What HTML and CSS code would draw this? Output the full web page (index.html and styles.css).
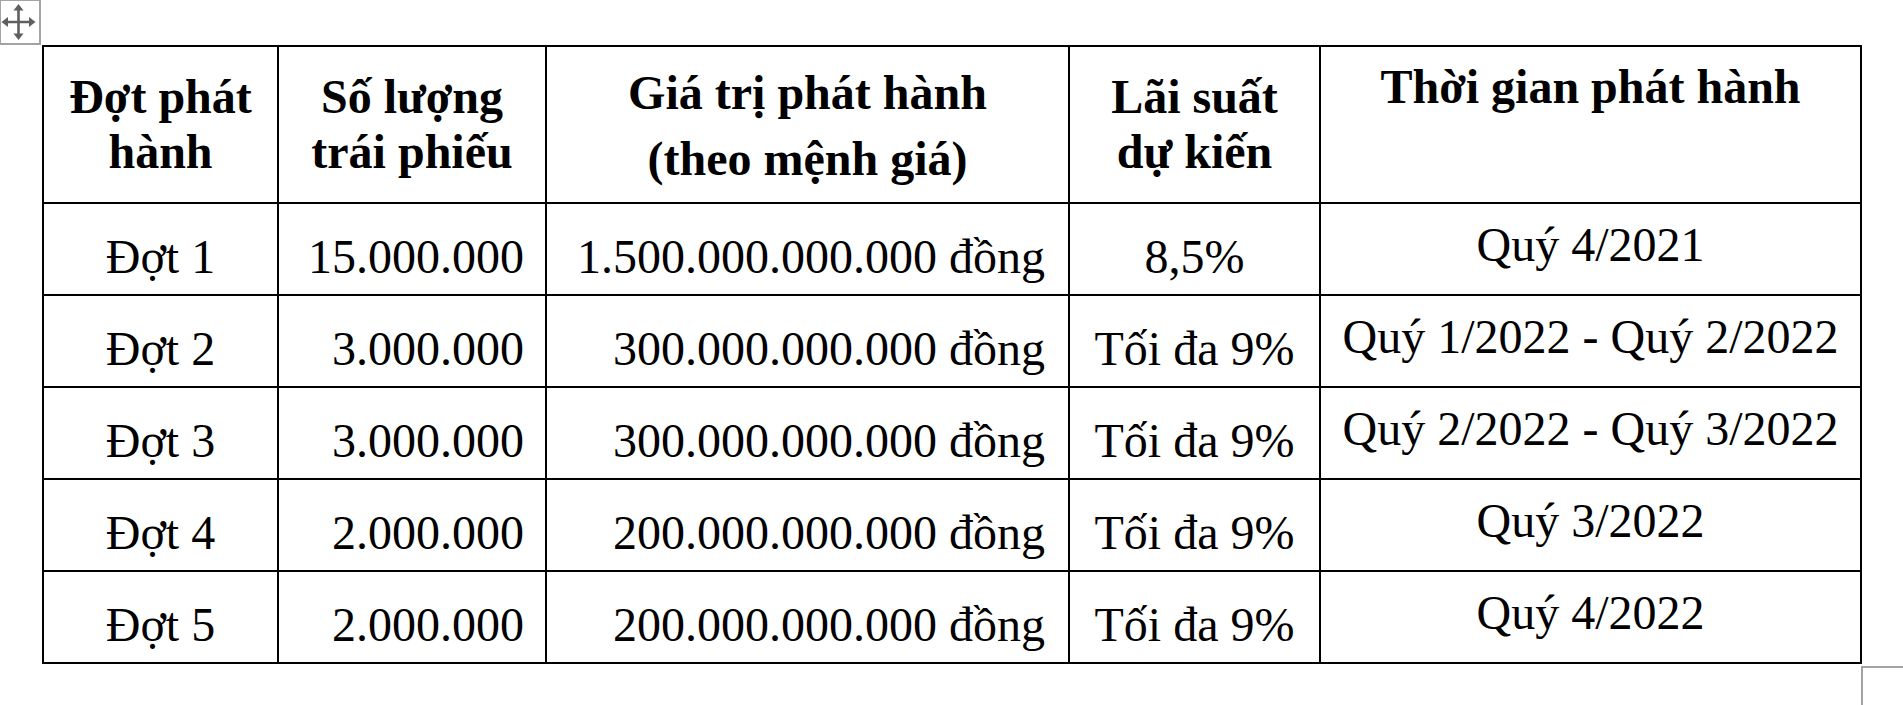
FILE: index.html
```html
<!DOCTYPE html>
<html lang="vi">
<head>
<meta charset="utf-8">
<title>Đợt phát hành trái phiếu</title>
<link rel="stylesheet" href="styles.css">
</head>
<body>
<div class="move-handle">
  <svg width="40" height="44" viewBox="0 0 40 44" aria-hidden="true">
    <path d="M18.5 9V35M6 22H31" stroke="#5f5f5f" stroke-width="2.6" fill="none"/>
    <polygon points="18.5,4 13.5,10.5 23.5,10.5" fill="#5f5f5f"/>
    <polygon points="18.5,40 13.5,33.5 23.5,33.5" fill="#5f5f5f"/>
    <polygon points="1.5,22 8,17 8,27" fill="#5f5f5f"/>
    <polygon points="35.5,22 29,17 29,27" fill="#5f5f5f"/>
  </svg>
</div>
<table class="bonds">
  <colgroup>
    <col class="c1"><col class="c2"><col class="c3"><col class="c4"><col class="c5">
  </colgroup>
  <thead>
    <tr class="head">
      <th class="h-std">Đợt phát<br>hành</th>
      <th class="h-std">Số lượng<br>trái phiếu</th>
      <th class="h-value"><p>Giá trị phát hành</p><p class="second">(theo mệnh giá)</p></th>
      <th class="h-std">Lãi suất<br>dự kiến</th>
      <th class="h-time">Thời gian phát hành</th>
    </tr>
  </thead>
  <tbody>
    <tr>
      <td class="center">Đợt 1</td>
      <td class="count">15.000.000</td>
      <td class="amount">1.500.000.000.000 đồng</td>
      <td class="center">8,5%</td>
      <td class="time">Quý 4/2021</td>
    </tr>
    <tr>
      <td class="center">Đợt 2</td>
      <td class="count">3.000.000</td>
      <td class="amount">300.000.000.000 đồng</td>
      <td class="center">Tối đa 9%</td>
      <td class="time">Quý 1/2022 - Quý 2/2022</td>
    </tr>
    <tr>
      <td class="center">Đợt 3</td>
      <td class="count">3.000.000</td>
      <td class="amount">300.000.000.000 đồng</td>
      <td class="center">Tối đa 9%</td>
      <td class="time">Quý 2/2022 - Quý 3/2022</td>
    </tr>
    <tr>
      <td class="center">Đợt 4</td>
      <td class="count">2.000.000</td>
      <td class="amount">200.000.000.000 đồng</td>
      <td class="center">Tối đa 9%</td>
      <td class="time">Quý 3/2022</td>
    </tr>
    <tr>
      <td class="center">Đợt 5</td>
      <td class="count">2.000.000</td>
      <td class="amount">200.000.000.000 đồng</td>
      <td class="center">Tối đa 9%</td>
      <td class="time">Quý 4/2022</td>
    </tr>
  </tbody>
</table>
<div class="resize-handle"></div>
</body>
</html>
```

FILE: styles.css
```css
html, body {
  margin: 0;
  padding: 0;
  background: #ffffff;
  overflow: hidden;
}

body {
  position: relative;
  width: 1903px;
  height: 705px;
  font-family: "Liberation Serif", "Times New Roman", serif;
  color: #000;
}

.move-handle {
  position: absolute;
  left: 0;
  top: 0;
  width: 38px;
  height: 42px;
  border: 2px solid #a3a3a3;
  border-left-width: 1px;
  border-top-width: 1px;
  box-sizing: content-box;
}

.move-handle svg {
  display: block;
  position: absolute;
  left: -1px;
  top: -1px;
}

.resize-handle {
  position: absolute;
  left: 1861px;
  top: 666px;
  width: 60px;
  height: 60px;
  border-top: 2px solid #a3a3a3;
  border-left: 2px solid #a3a3a3;
}

.bonds {
  margin: 45px 0 0 42px;
  border-collapse: collapse;
  table-layout: fixed;
  width: 1820px;
  font-size: 48px;
  line-height: 55px;
}

.c1 { width: 235px; }
.c2 { width: 268px; }
.c3 { width: 523px; }
.c4 { width: 251px; }
.c5 { width: 541px; }

.bonds th,
.bonds td {
  border: 2px solid #000;
  vertical-align: top;
  padding: 0;
  white-space: nowrap;
}

.bonds th {
  font-weight: bold;
  text-align: center;
}

.bonds .head {
  height: 157px;
}

.bonds tbody tr {
  height: 92px;
}

.bonds th.h-std {
  padding-top: 22px;
}

.bonds th.h-value {
  padding-top: 18px;
}

.h-value p {
  margin: 0;
}

.h-value .second {
  margin-top: 11px;
}

.bonds th.h-time {
  padding-top: 12px;
}

.bonds td {
  padding-top: 25px;
}

.bonds td.center {
  text-align: center;
}

.bonds td.count {
  text-align: right;
  padding-right: 21px;
}

.bonds td.amount {
  text-align: right;
  padding-right: 23px;
}

.bonds td.time {
  text-align: center;
  padding-top: 13px;
}
```
